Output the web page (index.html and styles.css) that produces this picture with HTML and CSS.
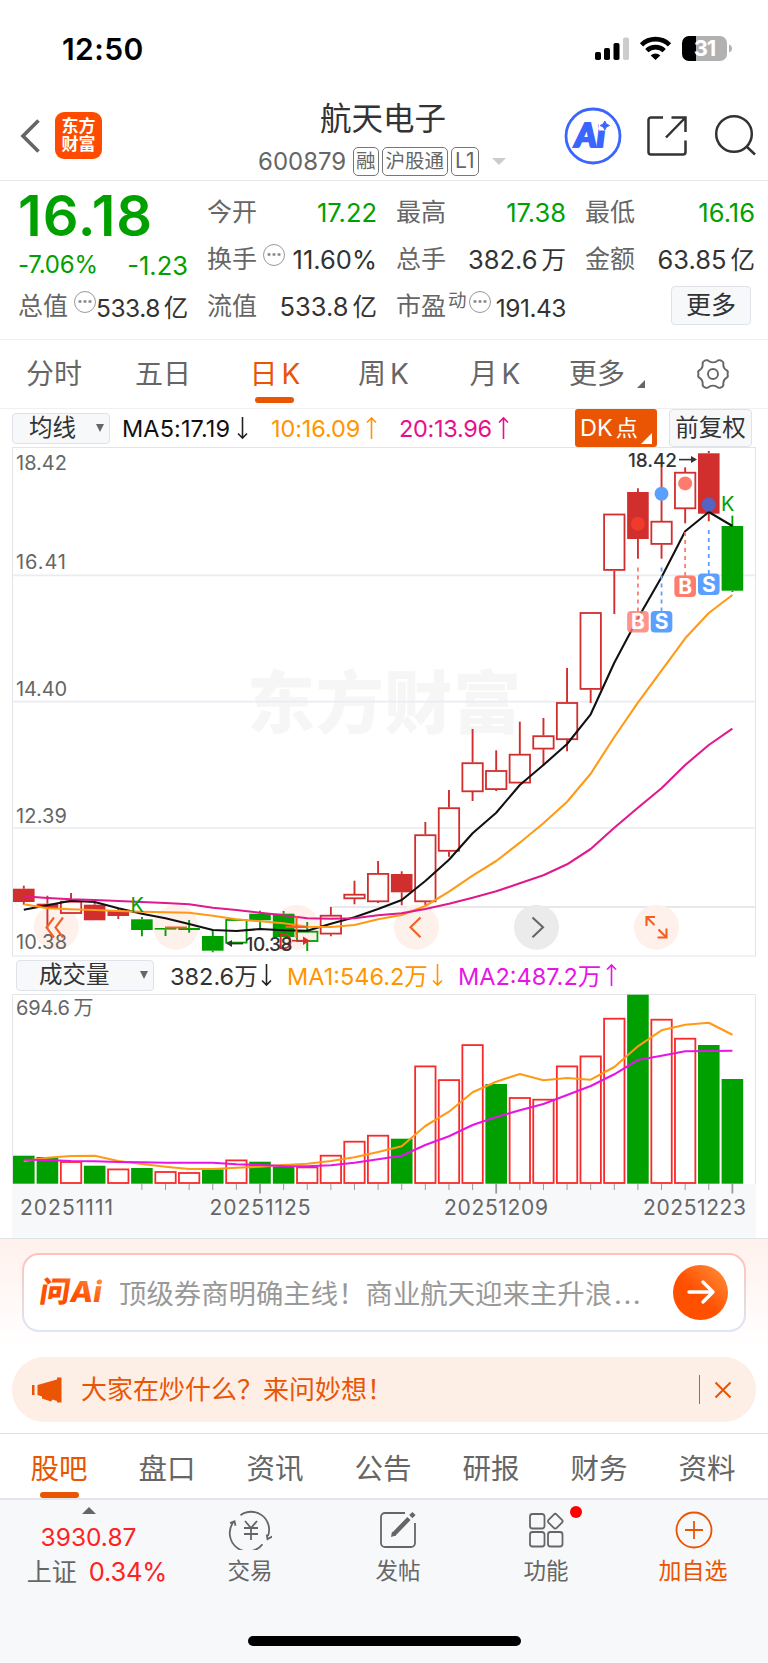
FILE: index.html
```html
<!DOCTYPE html>
<html lang="zh-CN">

<head>
    <meta charset="utf-8">
    <title>航天电子 600879</title>
    <link rel="stylesheet" href="styles.css">
</head>

<body>
    <div class="status-bar">
        <span class="time">12:50</span>
        <svg class="status-icons" width="142" height="30" viewBox="0 0 142 30">
            <rect x="2" y="17" width="6" height="8" rx="1.8" />
            <rect x="11" y="13" width="6" height="12" rx="1.8" />
            <rect x="20.500" y="8" width="6" height="17" rx="1.8" />
            <rect x="30" y="2.500" width="6" height="22.500" rx="1.800" fill="#ccc" />
            <g fill="none" stroke="#000" stroke-width="4.600">
                <path d="M48.500 9.800a20 20 0 0 1 28 0" />
                <path d="M53.800 15.600a12.500 12.500 0 0 1 17.400 0" />
            </g>
            <path d="M62.500 25l-4.800-4.600a7 7 0 0 1 9.600 0z" />
            <path d="M96 1h7v25h-7a7 7 0 0 1-7-7V8a7 7 0 0 1 7-7z" />
            <path d="M103 1h24a7 7 0 0 1 7 7v11a7 7 0 0 1-7 7h-24z" fill="#b1b1b1" />
            <path d="M136 9.500q3 1.200 3 4t-3 4z" fill="#b1b1b1" />
            <text x="111.500" y="21" text-anchor="middle" class="battery">31</text>
        </svg>
    </div>

    <div class="header">
        <div class="header-left">
            <svg width="20" height="36" viewBox="0 0 20 36" fill="none" stroke="#666" stroke-width="3.6">
                <path d="M18.500 2.500L3 18l15.500 15.500" />
            </svg>
            <div class="logo">东方<br>财富</div>
        </div>
        <div class="title">
            <div class="name">航天电子</div>
            <div class="code">
                <span class="num">600879</span>
                <span class="tag">融</span>
                <span class="tag">沪股通</span>
                <span class="tag">L1</span>
                <i class="arrow"></i>
            </div>
        </div>
        <div class="header-right">
            <svg width="58" height="58" viewBox="0 0 58 58">
                <circle cx="29" cy="29" r="27" fill="none" stroke="#3a66ff" stroke-width="2.8" />
                <text x="11" y="40" class="ai">Ai</text>
                <rect x="35" y="11" width="12" height="12.500" fill="#fff" />
                <path d="M40.800 14q.9 3.800 4.700 4.500-3.800.8-4.700 4.500-.9-3.700-4.700-4.500 3.800-.7 4.700-4.500z" fill="#3a66ff" stroke="#3a66ff" stroke-width="1" />
            </svg>
            <svg width="42" height="42" viewBox="0 0 42 42" fill="none" stroke="#333" stroke-width="2.500">
                <path d="M17 2.500H5A2.500 2.500 0 0 0 2.500 5v32A2.500 2.500 0 0 0 5 39.500h32a2.500 2.500 0 0 0 2.500-2.500V25.500M25.500 2.500h14V17M39 3L20 22.500" />
            </svg>
            <svg width="43" height="43" viewBox="0 0 43 43" fill="none" stroke="#333" stroke-width="2.500">
                <circle cx="20" cy="20" r="17.800" />
                <path d="M32.500 32.500l8.500 8" />
            </svg>
        </div>
    </div>

    <div class="quote">
        <div class="price">
            <div class="now">16.18</div>
            <div class="change"><span class="percent">-7.06%</span><span>-1.23</span></div>
        </div>
        <div class="item"><label>今开</label><b class="down">17.22</b></div>
        <div class="item"><label>最高</label><b class="down">17.38</b></div>
        <div class="item"><label>最低</label><b class="down">16.16</b></div>
        <div class="item"><label>换手</label><i class="dots"></i><b>11.60%</b></div>
        <div class="item"><label>总手</label><b>382.6<em>万</em></b></div>
        <div class="item"><label>金额</label><b>63.85<em>亿</em></b></div>
        <div class="item low"><label>总值</label><i class="dots"></i><b>533.8<em>亿</em></b></div>
        <div class="item"><label>流值</label><b>533.8<em>亿</em></b></div>
        <div class="item low"><label>市盈<sup>动</sup></label><i class="dots"></i><b>191.43</b></div>
        <div class="item"><span class="more">更多</span></div>
    </div>

    <div class="period-tabs">
        <span>分时</span>
        <span>五日</span>
        <span class="active">日<u>K</u></span>
        <span>周<u>K</u></span>
        <span>月<u>K</u></span>
        <span>更多<i class="corner"></i></span>
        <span class="setting">
            <svg width="34" height="34" viewBox="-17 -17 34 34" fill="none" stroke="#666" stroke-width="1.900">
                <path d="M-8-13.500Q-5.500-14.500-4-12.800 0-10.500 4-12.800 5.500-14.500 8-13.500 11-12.200 10.300-9.800 10.300-5.500 13.800-3.600 15.500-2.500 14.500 0 15.500 2.500 13.800 3.600 10.300 5.500 10.300 9.800 11 12.200 8 13.500 5.500 14.500 4 12.800 0 10.500-4 12.800-5.500 14.500-8 13.500-11 12.200-10.300 9.800-10.300 5.500-13.800 3.600-15.500 2.500-14.500 0-15.500-2.500-13.800-3.600-10.300-5.500-10.300-9.800-11-12.200-8-13.500z" />
                <circle r="5" />
            </svg>
        </span>
    </div>

    <div class="ma-row">
        <span class="select">均线<i class="caret"></i></span>
        <span class="ma ma5">MA5:17.19</span>
        <svg class="dir" width="11" height="24" viewBox="0 0 11 24"><path d="M5.500 1v21M1 17.500l4.500 4.500 4.500-4.500" /></svg>
        <span class="ma ma10">10:16.09</span>
        <svg class="dir orange" width="11" height="24" viewBox="0 0 11 24"><path d="M5.500 23V2M1 6.500L5.500 2 10 6.500" /></svg>
        <span class="ma ma20">20:13.96</span>
        <svg class="dir pink" width="11" height="24" viewBox="0 0 11 24"><path d="M5.500 23V2M1 6.500L5.500 2 10 6.500" /></svg>
        <span class="dk">DK<em>点</em><i></i></span>
        <span class="adjust">前复权</span>
    </div>

    <svg id="kline" width="768" height="510" viewBox="0 447 768 510"></svg>

    <div class="vol-row">
        <span class="select">成交量<i class="caret"></i></span>
        <span class="ma vol">382.6万</span>
        <svg class="dir" width="11" height="24" viewBox="0 0 11 24"><path d="M5.500 1v21M1 17.500l4.500 4.500 4.500-4.500" /></svg>
        <span class="ma vol1">MA1:546.2万</span>
        <svg class="dir orange" width="11" height="24" viewBox="0 0 11 24"><path d="M5.500 1v21M1 17.500l4.500 4.500 4.500-4.500" /></svg>
        <span class="ma vol2">MA2:487.2万</span>
        <svg class="dir magenta" width="11" height="24" viewBox="0 0 11 24"><path d="M5.500 23V2M1 6.500L5.500 2 10 6.500" /></svg>
    </div>

    <svg id="volume" width="768" height="244" viewBox="0 994 768 244"></svg>

    <div class="ask">
        <div class="ask-box">
            <svg class="ask-icon" width="68" height="44" viewBox="0 -4 68 44">
                <defs>
                    <linearGradient id="askfill" x1="0" y1="1" x2="1" y2="0">
                        <stop offset="0.500" stop-color="#ff5000" />
                        <stop offset="1" stop-color="#ff9a50" />
                    </linearGradient>
                </defs>
                <text x="3" y="28.500" transform="skewX(-9)" class="ask-logo" textLength="62" lengthAdjust="spacingAndGlyphs" fill="url(#askfill)">问Ai</text>
            </svg>
            <span class="ask-text">顶级券商明确主线！商业航天迎来主升浪<em>...</em></span>
            <span class="go">
                <svg width="30" height="26" viewBox="0 0 30 26" fill="none" stroke="#fff" stroke-width="3.400" stroke-linecap="round" stroke-linejoin="round">
                    <path d="M3 13h24M17 3l10 10-10 10" />
                </svg>
            </span>
        </div>
    </div>

    <div class="banner">
        <svg width="31" height="26" viewBox="0 0 31 26" fill="#ea5504">
            <path d="M1 8h2.500v10H1zM6.500 8L26 2.500V.500h4.500v25H26V24l-4.500-1.500L20 24.500l-9-3V19.500L6.500 18z" />
        </svg>
        <span>大家在炒什么？来问妙想！</span>
        <i></i>
        <svg width="18" height="18" viewBox="0 0 18 18" fill="none" stroke="#ea5504" stroke-width="2">
            <path d="M1.500 1.500l15 15M16.500 1.500l-15 15" />
        </svg>
    </div>

    <div class="info-tabs">
        <span class="active">股吧</span>
        <span>盘口</span>
        <span>资讯</span>
        <span>公告</span>
        <span>研报</span>
        <span>财务</span>
        <span>资料</span>
    </div>

    <div class="bottom-nav">
        <div class="index">
            <i class="up"></i>
            <div class="value">3930.87</div>
            <div class="rate">上证<b>0.34%</b></div>
        </div>
        <div class="nav">
            <svg width="44" height="40" viewBox="-23 -20 44 40" fill="none" stroke="#666" stroke-width="1.800">
                <path d="M-10.500-14.800A18 18 0 0 1 17 6M11.500 14.200A18 18 0 0 1-17.500-8M-21-7l4.500-1.800 1 4.500M21.200 6.500L16.500 9l-.8-4.500" />
                <path d="M-6-9L0-2l6-7M0-2V10M-7-2H7M-7 4H7" />
            </svg>
            <span>交易</span>
        </div>
        <div class="nav">
            <svg width="40" height="40" viewBox="-20 -20 40 40" fill="none" stroke="#666" stroke-width="1.800">
                <path d="M7-17H-13a4 4 0 0 0-4 4V13a4 4 0 0 0 4 4H13a4 4 0 0 0 4-4V-7" />
                <path d="M-4.500 4.500L11-11.500" stroke-width="4.500" />
                <path d="M-7 7l1-5.500 4 4z" fill="#666" stroke="none" />
                <path d="M12.800-13.300L16-16.500" stroke-width="4.500" />
            </svg>
            <span>发帖</span>
        </div>
        <div class="nav">
            <svg width="40" height="40" viewBox="-20 -20 40 40" fill="none" stroke="#666" stroke-width="1.800">
                <rect x="-16" y="-16" width="14.500" height="14.500" rx="2.500" />
                <rect x="-16" y="2" width="14.500" height="14.500" rx="2.500" />
                <rect x="2" y="2" width="14.500" height="14.500" rx="2.500" />
                <rect x="3.500" y="-14.500" width="11.500" height="11.500" rx="2" transform="rotate(45 9.250 -8.750)" />
            </svg>
            <i class="badge"></i>
            <span>功能</span>
        </div>
        <div class="nav add">
            <svg width="40" height="40" viewBox="-20 -20 40 40" fill="none" stroke="#ea5504" stroke-width="1.800">
                <circle r="17.500" />
                <path d="M-9 0H9M0-9V9" />
            </svg>
            <span>加自选</span>
        </div>
        <div class="home-bar"></div>
    </div>
    <script src="chart.js"></script>
</body>

</html>
```

FILE: styles.css
```css
body {
    margin: 0;
    width: 768px;
    background: #fff;
    color: #333;
    font-family: Inter, "Noto Sans CJK SC", sans-serif;
    font-weight: 400;
}

body, span, label, div {
    white-space: nowrap;
}

i, em, b, u {
    font-style: normal;
    font-weight: inherit;
    text-decoration: none;
}

svg {
    display: block;
    flex: none;
}

.status-bar {
    display: flex;
    justify-content: space-between;
    box-sizing: border-box;
    height: 100px;
    padding: 35px 33px 0 62px;
}

.time {
    font-size: 30px;
    font-weight: 600;
    line-height: 29px;
    color: #000;
    letter-spacing: 0.4px;
}

.battery {
    font-size: 22px;
    font-weight: 700;
    fill: #fff;
    letter-spacing: -1px;
}

.header {
    display: grid;
    grid-template-columns: 250px 1fr 214px;
    box-sizing: border-box;
    height: 81px;
    border-bottom: 1px solid #e6e6e6;
}

.header-left {
    display: flex;
    align-items: center;
    gap: 15px;
    padding: 0 0 9px 20px;
}

.logo {
    width: 47px;
    height: 47px;
    box-sizing: border-box;
    padding-top: 5px;
    border-radius: 9px;
    background: #ff4b00;
    color: #fff;
    font-size: 17px;
    font-weight: 700;
    line-height: 18px;
    text-align: center;
}

.name {
    font-size: 31.5px;
    line-height: 38px;
    padding-left: 70px;
}

.title {
    min-width: 0;
}

.code {
    display: flex;
    align-items: center;
    gap: 3px;
    height: 30px;
    margin: 8px 0 0 8px;
    color: #666;
}

.num {
    width: 92px;
    font-size: 24px;
    letter-spacing: 0;
}

.tag {
    box-sizing: border-box;
    height: 29px;
    padding: 0 2px;
    border: 1px solid #777;
    border-radius: 5px;
    font-size: 19.5px;
    line-height: 26px;
}

.tag:nth-child(3) {
    padding: 0 3px;
}

.tag:nth-child(4) {
    padding: 0 3px;
    font-size: 21px;
}

.arrow {
    margin-left: 10px;
    border: 7px solid transparent;
    border-top-color: #ccc;
    border-bottom: 0;
}

.header-right {
    display: flex;
    align-items: center;
    gap: 24px;
    padding: 0 0 9px 10px;
}

.header-right svg:last-child {
    margin-left: 2px;
}

.ai {
    font-family: Lato, Inter, sans-serif;
    font-size: 33px;
    font-weight: 900;
    font-style: italic;
    fill: #3a66ff;
    stroke: #3a66ff;
    stroke-width: 2.2px;
}

.quote {
    display: grid;
    grid-template-columns: repeat(4, 170px);
    grid-template-rows: repeat(3, 47px);
    column-gap: 19px;
    box-sizing: border-box;
    height: 159px;
    padding: 8px 0 0 18px;
    border-bottom: 1px solid #f0f0f0;
}

.price {
    grid-row: span 2;
    color: #00a000;
}

.now {
    height: 59px;
    font-size: 56px;
    font-weight: 600;
    line-height: 54px;
    letter-spacing: 1px;
}

.change {
    display: flex;
    justify-content: space-between;
    font-size: 25.5px;
    line-height: 36px;
}

.change .percent {
    font-size: 24px;
    line-height: 34px;
    letter-spacing: -0.2px;
}

.item {
    display: flex;
    align-items: center;
}

.item label {
    font-size: 25px;
    line-height: 47px;
    color: #666;
}

.item b {
    margin-left: auto;
    font-size: 25.5px;
    line-height: 47px;
    letter-spacing: 0;
}

.item em {
    margin-left: 4px;
    font-size: 24.5px;
    letter-spacing: 0;
}

.item.low b {
    font-size: 24.5px;
    letter-spacing: -0.5px;
    padding-top: 3px;
}

.item sup {
    font-size: 18.5px;
    line-height: 0;
    vertical-align: 8px;
    margin-left: 2px;
}

.item .down {
    color: #00a000;
}

.dots {
    flex: none;
    width: 22px;
    height: 22px;
    margin: -10px 0 0 6px;
    box-sizing: border-box;
    padding: 0 2px;
    border: 1.5px solid #999;
    border-radius: 50%;
    background: radial-gradient(circle, #888 1.2px, transparent 1.7px) center / 5px 19px repeat-x;
    background-clip: content-box;
}

.item.low sup {
    margin-right: -4px;
}

.more {
    box-sizing: border-box;
    width: 80px;
    height: 39px;
    margin: 0 4px 2px auto;
    border: 1px solid #dfe2e8;
    border-radius: 4px;
    background: #f7f8fa;
    font-size: 25px;
    line-height: 37px;
    text-align: center;
}

.period-tabs {
    display: grid;
    grid-template-columns: 108px 110px 114px 103px 120px 84px 129px;
    box-sizing: border-box;
    height: 69px;
    border-bottom: 1px solid #f0f0f0;
    font-size: 28px;
    line-height: 66px;
    color: #666;
}

.period-tabs span {
    display: flex;
    justify-content: center;
    align-items: center;
    position: relative;
}

.period-tabs .setting {
    padding: 0 0 1px 19px;
}

.period-tabs u {
    margin-left: 4px;
}

.period-tabs .active, .info-tabs .active {
    color: #ea5504;
}

.active::after {
    content: "";
    position: absolute;
    left: 50%;
    bottom: 5px;
    width: 39px;
    height: 6px;
    margin-left: -20px;
    border-radius: 3px;
    background: #ea5504;
}

.corner {
    position: absolute;
    right: -6px;
    bottom: 20px;
    border-left: 8px solid transparent;
    border-bottom: 8px solid #666;
}

.ma-row, .vol-row {
    display: flex;
    align-items: center;
    box-sizing: border-box;
    height: 38px;
    padding-left: 12px;
    font-size: 23.5px;
    color: #111;
}

.vol-row {
    height: 37px;
    padding: 0 0 1px 16px;
}

.select {
    display: flex;
    align-items: center;
    justify-content: space-between;
    box-sizing: border-box;
    width: 98px;
    height: 31px;
    padding: 0 5px 1px 16px;
    border: 1px solid #dfe2e8;
    border-radius: 4px;
    background: #f7f8fa;
    color: #333;
    line-height: 28px;
}

.vol-row .select {
    width: 138px;
    padding: 0 5px 1px 22px;
}

.caret {
    border: 4.5px solid transparent;
    border-top: 8px solid #666;
    border-bottom: 0;
}

.ma5 {
    width: 115px;
    margin-left: 12px;
    letter-spacing: 0.1px;
}

.ma10 {
    width: 95px;
    margin-left: 23px;
    color: #ff9500;
    letter-spacing: -0.1px;
}

.ma20 {
    width: 99px;
    margin-left: 22px;
    color: #e60f8c;
    letter-spacing: -0.3px;
}

.vol {
    width: 91px;
    margin-left: 16px;
    color: #333;
}

.vol1 {
    width: 145px;
    margin-left: 15px;
    color: #ff9500;
}

.vol2 {
    width: 148px;
    margin-left: 15px;
    color: #e516e5;
}

.dir {
    fill: none;
    stroke: #222;
    stroke-width: 1.6px;
}

.dir.orange {
    stroke: #ff9500;
}

.dir.pink {
    stroke: #e60f8c;
}

.dir.magenta {
    stroke: #e516e5;
}

.dk {
    box-sizing: border-box;
    width: 82px;
    height: 38px;
    margin-left: 66px;
    padding-left: 5px;
    border-radius: 3px;
    background: #ea5504;
    color: #fff;
    line-height: 37px;
    position: relative;
}

.dk em {
    margin-left: 3px;
    font-size: 22px;
}

.dk i {
    position: absolute;
    right: 5px;
    bottom: 3px;
    border-left: 11px solid transparent;
    border-bottom: 11px solid #fff;
}

.adjust {
    box-sizing: border-box;
    width: 83px;
    height: 38px;
    margin-left: 12px;
    border: 1px solid #dfe2e8;
    border-radius: 4px;
    background: #f7f8fa;
    color: #333;
    line-height: 36px;
    text-align: center;
}

.axis {
    font-size: 20px;
    fill: #666;
}

.mark {
    font-size: 19px;
    font-weight: 500;
    fill: #333;
}

.watermark {
    font-size: 68px;
    font-weight: 900;
    fill: #f6f6f6;
}

.flag {
    font-size: 21px;
    font-weight: 700;
    fill: #fff;
    text-anchor: middle;
}

.ask {
    box-sizing: border-box;
    height: 119px;
    padding: 14px 22px 0;
    border-top: 1px solid #dfe2e8;
    background: linear-gradient(#fff1ec, #fff 90%);
}

.ask-box {
    display: flex;
    align-items: center;
    box-sizing: border-box;
    height: 79px;
    padding: 0 0 1px 16px;
    border: 2px solid transparent;
    border-radius: 17px;
    background: linear-gradient(#fff, #fff) padding-box, linear-gradient(#ffc2b8, #dce6f8) border-box;
}

.ask-icon {
    overflow: visible;
}

.ask-logo {
    font-size: 29px;
    font-weight: 800;
}

.ask-text {
    width: 548px;
    margin: -1px 0 0 11px;
    font-size: 27.4px;
    color: #999;
}

.ask-text em {
    letter-spacing: 1.5px;
    margin-left: 2px;
}

.go {
    display: flex;
    align-items: center;
    justify-content: center;
    width: 55px;
    height: 55px;
    margin-left: 6px;
    border-radius: 50%;
    background: linear-gradient(45deg, #ff5000 45%, #ff9440);
}

.banner {
    display: flex;
    align-items: center;
    box-sizing: border-box;
    width: 744px;
    height: 65px;
    margin: 0 12px 11px;
    padding: 0 24px 0 19px;
    border-radius: 33px;
    background: #fdeee6;
    color: #ea5504;
}

.banner span {
    margin: -4px 0 0 19px;
    font-size: 26px;
}

.banner i {
    width: 1px;
    height: 29px;
    margin: 0 14px 0 auto;
    background: #ea5504;
}

.info-tabs {
    display: grid;
    grid-template-columns: repeat(7, 108px);
    grid-template-rows: 64px;
    box-sizing: border-box;
    height: 65px;
    padding-left: 5px;
    border-top: 1px solid #dfe2e8;
    font-size: 28.5px;
    line-height: 70px;
    text-align: center;
    color: #666;
}

.info-tabs span {
    height: 64px;
    position: relative;
}

.info-tabs .active::after {
    bottom: 0;
    margin-left: -19px;
}

.bottom-nav {
    display: grid;
    grid-template-columns: 176px repeat(4, 148px);
    box-sizing: border-box;
    height: 165px;
    border-top: 2px solid #e3e5e9;
    background: #f7f8fa;
    font-size: 22.5px;
    color: #666;
    position: relative;
}

.index, .nav {
    display: flex;
    flex-direction: column;
    align-items: center;
}

.up {
    margin-top: 7px;
    border: 7px solid transparent;
    border-bottom: 7px solid #666;
    border-top: 0;
}

.index {
    font-size: 25px;
    line-height: 34px;
    padding-left: 1px;
}

.index .value {
    margin-top: 7px;
    color: #f22;
    font-size: 24.5px;
    line-height: 32px;
}

.index .rate {
    margin: 2px 0 0 17px;
}

.index b {
    margin-left: 12px;
    font-size: 25.5px;
    color: #f22;
    letter-spacing: -0.2px;
}

.nav {
    padding-top: 10px;
    position: relative;
}

.nav span {
    margin-top: 4px;
    line-height: 34px;
}

.nav.add {
    color: #ea5504;
}

.nav.add span {
    font-size: 23px;
    margin-right: 2px;
}

.badge {
    position: absolute;
    left: 98px;
    top: 6px;
    width: 12px;
    height: 12px;
    border-radius: 50%;
    background: #f00;
}

.home-bar {
    position: absolute;
    left: 248px;
    bottom: 17px;
    width: 273px;
    height: 10px;
    border-radius: 5px;
    background: #000;
}
```

FILE: chart.js
```js
var RED = '#d12e2e';
var GREEN = '#00a000';
var STEP = 23.62;

// type (R/G filled, r/g hollow), top, bottom, high, low
var candles = [
    ['R', 888.7, 902, 885.7, 904.7], ['R', 903.7, 908, 895.7, 929], ['r', 901, 913.7, 893, 914],
    ['R', 904.7, 920.3, 901, 920.3], ['R', 910.7, 916, 909, 919], ['G', 919.3, 930, 917, 936.3],
    ['G', 928, 929.6, 928, 936], ['G', 928, 930, 920, 932.7], ['G', 936, 950.7, 930.7, 952.3],
    ['g', 919.3, 943.3, 919.3, 943.3], ['G', 913.7, 920.3, 910.7, 929], ['G', 913.7, 937, 911, 937],
    ['g', 931, 941.7, 922, 951], ['r', 915, 934.3, 907, 936.3], ['r', 894, 899, 880.7, 904.3],
    ['r', 873.2, 902, 861, 903], ['R', 874, 892.3, 871.3, 905.3], ['r', 834.5, 902, 822, 905],
    ['r', 807.5, 851.5, 790, 856.7], ['r', 762.5, 792, 729, 801], ['r', 770.3, 789.8, 750.3, 791],
    ['r', 754, 783.3, 721.7, 783.3], ['r', 735.5, 749.3, 718, 765.3], ['r', 702.3, 739.9, 668, 751.3],
    ['r', 612.3, 689.6, 612.3, 703], ['r', 513.8, 570.6, 513.8, 614], ['R', 492, 539, 488.3, 558.7],
    ['r', 521, 544.6, 466.7, 558.7], ['r', 472, 509, 467.3, 523.3], ['R', 453.3, 513.7, 451, 521.3],
    ['G', 526, 590.7, 515.7, 592]
];

var ma5 = [909.7, 905.3, 900.7, 902, 908.3, 913.7, 918.3, 924, 930, 931, 929, 930.3, 930.7, 923.7, 917.3, 909, 900, 881, 859.7, 833.3, 812.7, 785, 765, 744, 714.3, 662.7, 618.3, 577.3, 531.3, 512, 526];
var ma10 = [904.3, 908.3, 909.3, 910, 911, 911.7, 912.3, 912.7, 915.7, 919.3, 921.3, 923.3, 926.7, 927, 925, 919.2, 915, 906, 891.7, 875.7, 861, 842.7, 823.3, 801.7, 773.7, 737, 702.7, 670.7, 638.3, 613, 595];
var ma20 = [896.3, 898, 899.3, 900, 901, 902, 903, 904.3, 907.7, 910, 912.7, 915.3, 918.3, 918.7, 918.3, 915.3, 913.3, 909, 903.7, 897.7, 891.3, 883.3, 875.3, 864.3, 849, 827.7, 807.7, 788.3, 765, 745, 728.7];

var volumes = [
    ['G', 1155.7], ['G', 1157], ['r', 1161.3], ['G', 1165.7], ['r', 1168.7], ['G', 1168], ['r', 1171.3], ['r', 1172.3],
    ['G', 1169.3], ['r', 1159.7], ['G', 1161.7], ['G', 1166.3], ['r', 1166.7], ['r', 1155], ['r', 1141], ['r', 1135],
    ['G', 1138.7], ['r', 1065.7], ['r', 1079.4], ['r', 1044.4], ['G', 1084], ['r', 1097.3], ['r', 1099], ['r', 1065.7],
    ['r', 1055.7], ['r', 1018], ['G', 994.7], ['r', 1019], ['r', 1038], ['G', 1045], ['G', 1079]
];
var vma1 = [1161, 1157.7, 1156, 1155.7, 1161, 1164, 1166.7, 1169, 1169, 1167.7, 1166.7, 1165, 1163.7, 1161, 1157.3, 1152, 1146.3, 1126, 1111.7, 1092.3, 1081.7, 1074, 1080.3, 1078, 1079.7, 1067, 1046.3, 1030.3, 1024.7, 1022.7, 1034.7];
var vma2 = [1159.7, 1160, 1161, 1161.3, 1162, 1162.3, 1162.7, 1162.7, 1162.7, 1164.3, 1165, 1166, 1166.3, 1165.3, 1162.7, 1159.3, 1155.7, 1145, 1136.3, 1125, 1117, 1110.3, 1104, 1095, 1086, 1074.3, 1060, 1055.7, 1051.3, 1051, 1050.7];

function cx(i) {
    return 23.8 + i * STEP;
}

function line(x1, y1, x2, y2, color, width, extra) {
    return `<line x1="${x1}" y1="${y1}" x2="${x2}" y2="${y2}" stroke="${color}" stroke-width="${width}" ${extra || ''}/>`;
}

function path(d, color, width) {
    return `<path d="${d}" fill="none" stroke="${color}" stroke-width="${width}"/>`;
}

function curve(values, color) {
    var points = values.map((y, i) => cx(i).toFixed(1) + ',' + y).join(' ');
    return `<polyline points="${points}" fill="none" stroke="${color}" stroke-width="2.100" stroke-linejoin="round"/>`;
}

function bar(i, top, bottom, color, hollow) {
    if (hollow) {
        return `<rect x="${cx(i) - 10.2}" y="${top + 0.7}" width="20.400" height="${bottom - top - 1.4}" fill="none" stroke="${color}" stroke-width="1.800"/>`;
    }
    return `<rect x="${cx(i) - 10.8}" y="${top}" width="21.600" height="${bottom - top}" fill="${color}"/>`;
}

function text(x, y, str, cls, width, extra) {
    var len = width ? `textLength="${width}"` : '';
    return `<text x="${x}" y="${y}" class="${cls}" ${len} ${extra || ''}>${str}</text>`;
}

function drawKline() {
    var s = text(247, 728, '东方财富', 'watermark', 274);
    [575.3, 701.7, 828].forEach(y => { s += line(12, y, 756, y, '#e9ecf1', 1.7); });
    s += line(330, 907, 756, 907, '#e8e8ea', 1.8);
    s += '<rect x="12.500" y="447.500" width="743" height="508.500" fill="none" stroke="#e2e4e9"/>';

    [56.3, 176, 296.7, 416.5, 536.5, 656.5].forEach((x, i) => {
        s += `<circle cx="${x}" cy="927.200" r="22.500" fill="${i === 4 ? '#ebebeb' : '#fef0ea'}"/>`;
    });

    s += text(16, 469.5, '18.42', 'axis', 51);
    s += text(16, 568.5, '16.41', 'axis', 50);
    s += text(16, 695.5, '14.40', 'axis', 51);
    s += text(16, 822.5, '12.39', 'axis', 51);
    s += text(16, 949, '10.38', 'axis', 51);

    candles.forEach((c, i) => {
        var color = c[0].toUpperCase() === 'R' ? RED : GREEN;
        var x = cx(i);
        s += line(x, c[3], x, c[1], color, 1.9) + line(x, c[2], x, c[4], color, 1.9);
        s += bar(i, c[1], c[2], color, c[0] === c[0].toLowerCase());
    });

    s += curve(ma5, '#111') + curve(ma10, '#ff9a17') + curve(ma20, '#e0198c');

    // zoom and scroll controls
    s += path('M54 917.500L46.500 927.500l7.500 10M63 917.500L55.500 927.500l7.500 10', '#f26122', 2.1);
    s += line(165, 927.5, 187, 927.5, '#f26122', 2);
    s += line(285.500, 927, 307.500, 927, '#f26122', 2) + line(296.5, 916, 296.5, 938, '#f26122', 2);
    s += path('M420.500 917.500L410.500 927.300l10 10', '#f26122', 2.1);
    s += path('M532.500 917.500L543 927.300l-10.500 10', '#666', 2.1);
    s += path('M655 917H646.500v9M646.500 917l8 8M657.500 937.500H666.500v-9M666.500 937.500l-8-8', '#f26122', 2.1);

    s += text(278, 948.5, 'D', 'axis', 0, 'style="fill:#d12e2e"');
    s += line(292, 940.7, 304, 940.7, RED, 1.7) + '<path d="M303 936.500l7 4.200-7 4.200z" fill="#d12e2e"/>';
    s += text(245.5, 951, '10.38', 'mark', 47);
    s += line(230, 943.6, 243, 943.6, '#333', 1.6) + '<path d="M226 943.600l6-3.500v7z" fill="#333"/>';
    s += text(628, 466.7, '18.42', 'mark', 49);
    s += line(679, 459.6, 692, 459.6, '#333', 1.6) + '<path d="M697 459.600l-6-3.500v7z" fill="#333"/>';
    s += text(130.5, 912, 'K', 'axis', 0, 'style="fill:#00a000"');
    s += text(721, 510.8, 'K', 'axis', 0, 'style="fill:#00a000"');

    // buy / sell flags: index, dot y, dash start, flag y
    [['B', 26, 523.7, 567.5, 621.7, '#f03a2b'], ['S', 27, 493.7, 567.5, 621.7, '#5b9fff'],
     ['B', 28, 483.4, 532, 586.2, '#ff7b6d'], ['S', 29, 504.5, 530, 584.3, '#5564c2']].forEach(f => {
        var x = cx(f[1]);
        var color = f[0] === 'B' ? '#ff7b6d' : '#5b9fff';
        s += `<circle cx="${x}" cy="${f[2]}" r="7" fill="${f[5]}"/>`;
        s += line(x, f[3], x, f[4] - 10, color, 1.8, 'stroke-dasharray="4 4"');
        s += `<rect x="${x - 10.8}" y="${f[4] - 10.8}" width="21.600" height="21.600" rx="4" fill="${color}" fill-opacity="${f[1] === 26 ? 0.8 : 1}"/>`;
        s += text(x, f[4] + 7.5, f[0], 'flag');
    });
    document.getElementById('kline').innerHTML = s;
}

function drawVolume() {
    var s = '<rect x="12" y="1184" width="744" height="54" fill="#f7f8fa"/>';
    s += path('M12.500 1184V994.500H755.500V1184', '#e2e4e9', 1);
    s += text(16, 1014.5, '694.6', 'axis', 54) + text(73.5, 1014.5, '万', 'axis', 0);

    volumes.forEach((v, i) => {
        s += bar(i, v[1], 1183.7, v[0] === 'G' ? GREEN : '#f92a2a', v[0] === 'r');
        if (i >= 5) {
            s += line(cx(i), 1184, cx(i), i % 10 ? 1190 : 1193.5, '#999', i % 10 ? 1 : 1.8);
        }
    });
    s += curve(vma1, '#ff9a17') + curve(vma2, '#e516e5');

    [[20, '20251111', 93], [209.5, '20251125', 101], [444, '20251209', 104], [643, '20251223', 103]].forEach(d => {
        s += text(d[0], 1215.3, d[1], 'axis', d[2], 'style="font-size:21px"');
    });
    document.getElementById('volume').innerHTML = s;
}

drawKline();
drawVolume();
```
